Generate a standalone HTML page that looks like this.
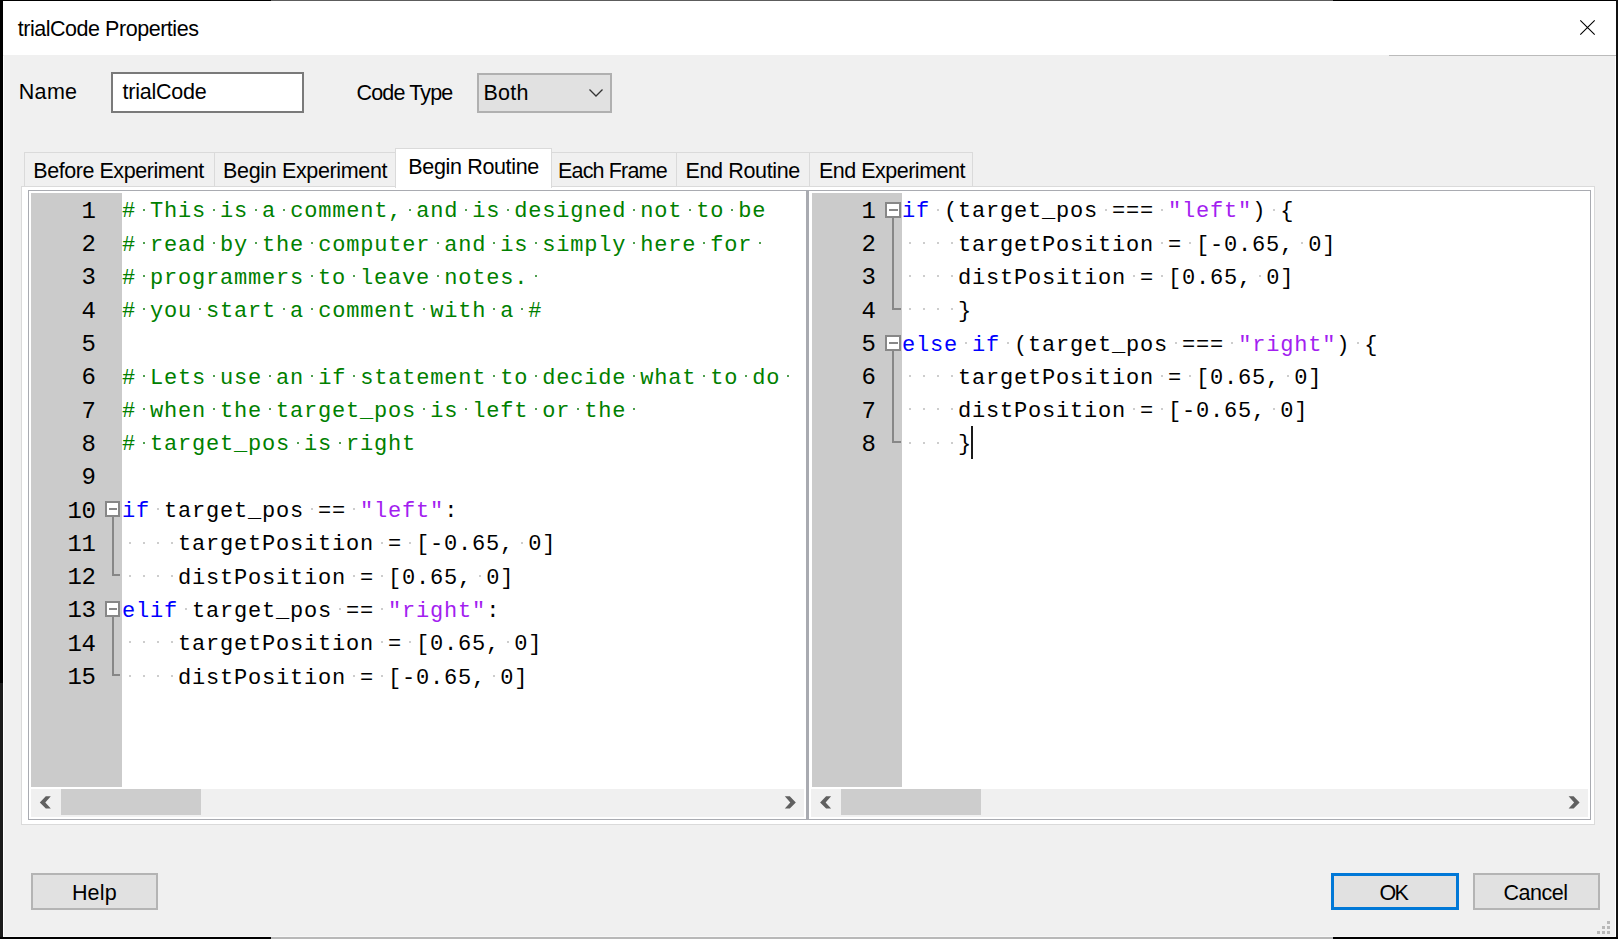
<!DOCTYPE html>
<html><head><meta charset="utf-8">
<style>
html,body{margin:0;padding:0;width:1618px;height:939px;overflow:hidden;background:#f0f0f0;}
*{box-sizing:border-box;}
.a{position:absolute;}
.ui{font-family:"Liberation Sans",sans-serif;font-size:20.5px;color:#000;white-space:pre;line-height:1;}
.mono{font-family:"Liberation Mono",monospace;white-space:pre;line-height:1;}
</style></head><body>
<div class="a" style="left:0;top:0;width:1618px;height:939px;background:#f0f0f0;overflow:hidden;">
<div class="a" style="left:3px;top:1px;width:1613px;height:54px;background:#fff;"></div>
<div class="a" style="left:1389px;top:55px;width:227px;height:1px;background:#bbbbbb;"></div>
<div class="a ui" style="left:17.7px;top:18.70px;font-size:21.5px;letter-spacing:-0.463px;color:#000;">trialCode Properties</div>
<svg class="a" style="left:1578px;top:18px;" width="20" height="20" viewBox="0 0 20 20"><path d="M2.3 2.3 L16.7 16.7 M16.7 2.3 L2.3 16.7" stroke="#000" stroke-width="1.1" fill="none"/></svg>
<div class="a ui" style="left:18.8px;top:82.00px;font-size:21.5px;letter-spacing:0.3px;color:#000;">Name</div>
<div class="a" style="left:111px;top:72px;width:193px;height:41px;background:#fff;border:2px solid #7a7a7a;"></div>
<div class="a ui" style="left:122.6px;top:81.80px;font-size:21.5px;letter-spacing:-0.238px;color:#000;">trialCode</div>
<div class="a ui" style="left:356.6px;top:82.50px;font-size:21.5px;letter-spacing:-0.863px;color:#000;">Code Type</div>
<div class="a" style="left:477px;top:73px;width:135px;height:40px;background:#e1e1e1;border:2px solid #b0b0b0;"></div>
<div class="a ui" style="left:483.5px;top:83.40px;font-size:21.5px;letter-spacing:0.267px;color:#000;">Both</div>
<svg class="a" style="left:587px;top:86px;" width="18" height="14" viewBox="0 0 18 14"><path d="M2.5 3.5 L9 10 L15.5 3.5" stroke="#333" stroke-width="1.3" fill="none"/></svg>
<div class="a" style="left:24px;top:152px;width:191px;height:36px;background:#f0f0f0;border:1px solid #dadada;"></div>
<div class="a ui" style="left:33.3px;top:160.60px;font-size:21.5px;letter-spacing:-0.45px;color:#000;">Before Experiment</div>
<div class="a" style="left:214px;top:152px;width:183px;height:36px;background:#f0f0f0;border:1px solid #dadada;"></div>
<div class="a ui" style="left:223.1px;top:160.60px;font-size:21.5px;letter-spacing:-0.353px;color:#000;">Begin Experiment</div>
<div class="a" style="left:551px;top:152px;width:126px;height:36px;background:#f0f0f0;border:1px solid #dadada;"></div>
<div class="a ui" style="left:558.0px;top:160.60px;font-size:21.5px;letter-spacing:-0.833px;color:#000;">Each Frame</div>
<div class="a" style="left:676px;top:152px;width:134px;height:36px;background:#f0f0f0;border:1px solid #dadada;"></div>
<div class="a ui" style="left:685.4px;top:160.60px;font-size:21.5px;letter-spacing:-0.34px;color:#000;">End Routine</div>
<div class="a" style="left:809px;top:152px;width:164px;height:36px;background:#f0f0f0;border:1px solid #dadada;"></div>
<div class="a ui" style="left:818.9px;top:160.60px;font-size:21.5px;letter-spacing:-0.492px;color:#000;">End Experiment</div>
<div class="a" style="left:21px;top:186px;width:1574px;height:639px;background:#fff;border:1px solid #dadada;"></div>
<div class="a" style="left:395px;top:148px;width:157px;height:40px;background:#fff;border:1px solid #dadada;border-bottom:none;"></div>
<div class="a" style="left:396px;top:186px;width:155px;height:3px;background:#fff;"></div>
<div class="a ui" style="left:408.3px;top:156.90px;font-size:21.5px;letter-spacing:-0.342px;color:#000;">Begin Routine</div>
<div class="a" style="left:28px;top:190px;width:1563px;height:630px;background:#fff;border:1px solid #a9abb1;"></div>
<div class="a" style="left:806px;top:190px;width:3px;height:630px;background:#a9abb1;"></div>
<div class="a" style="left:31px;top:193px;width:91px;height:594px;background:#cbcbcb;"></div>
<div class="a" style="left:812px;top:193px;width:90px;height:594px;background:#cbcbcb;"></div>
<div class="a" style="left:31px;top:789px;width:773px;height:28px;background:#f0f0f0;"></div>
<div class="a" style="left:811px;top:789px;width:777px;height:28px;background:#f0f0f0;"></div>
<div class="a" style="left:61px;top:789px;width:140px;height:26px;background:#cdcdcd;"></div>
<div class="a" style="left:841px;top:789px;width:140px;height:26px;background:#cdcdcd;"></div>
<svg class="a" style="left:0;top:0;" width="1618" height="939"><polygon fill="#606060" points="39.80,802.40 45.80,796.20 50.80,796.20 45.30,802.40 50.80,808.60 45.80,808.60"/></svg>
<svg class="a" style="left:0;top:0;" width="1618" height="939"><polygon fill="#606060" points="795.80,802.40 789.80,796.20 784.80,796.20 790.30,802.40 784.80,808.60 789.80,808.60"/></svg>
<svg class="a" style="left:0;top:0;" width="1618" height="939"><polygon fill="#606060" points="820.10,802.40 826.10,796.20 831.10,796.20 825.60,802.40 831.10,808.60 826.10,808.60"/></svg>
<svg class="a" style="left:0;top:0;" width="1618" height="939"><polygon fill="#606060" points="1579.60,802.40 1573.60,796.20 1568.60,796.20 1574.10,802.40 1568.60,808.60 1573.60,808.60"/></svg>
<div class="a mono" style="left:81.5px;top:199.81px;font-size:24.0px;letter-spacing:-0.400px;color:#000;">1</div>
<div class="a mono" style="left:81.5px;top:233.11px;font-size:24.0px;letter-spacing:-0.400px;color:#000;">2</div>
<div class="a mono" style="left:81.5px;top:266.41px;font-size:24.0px;letter-spacing:-0.400px;color:#000;">3</div>
<div class="a mono" style="left:81.5px;top:299.71px;font-size:24.0px;letter-spacing:-0.400px;color:#000;">4</div>
<div class="a mono" style="left:81.5px;top:333.01px;font-size:24.0px;letter-spacing:-0.400px;color:#000;">5</div>
<div class="a mono" style="left:81.5px;top:366.31px;font-size:24.0px;letter-spacing:-0.400px;color:#000;">6</div>
<div class="a mono" style="left:81.5px;top:399.61px;font-size:24.0px;letter-spacing:-0.400px;color:#000;">7</div>
<div class="a mono" style="left:81.5px;top:432.91px;font-size:24.0px;letter-spacing:-0.400px;color:#000;">8</div>
<div class="a mono" style="left:81.5px;top:466.21px;font-size:24.0px;letter-spacing:-0.400px;color:#000;">9</div>
<div class="a mono" style="left:67.5px;top:499.51px;font-size:24.0px;letter-spacing:-0.400px;color:#000;">10</div>
<div class="a mono" style="left:67.5px;top:532.81px;font-size:24.0px;letter-spacing:-0.400px;color:#000;">11</div>
<div class="a mono" style="left:67.5px;top:566.11px;font-size:24.0px;letter-spacing:-0.400px;color:#000;">12</div>
<div class="a mono" style="left:67.5px;top:599.41px;font-size:24.0px;letter-spacing:-0.400px;color:#000;">13</div>
<div class="a mono" style="left:67.5px;top:632.71px;font-size:24.0px;letter-spacing:-0.400px;color:#000;">14</div>
<div class="a mono" style="left:67.5px;top:666.01px;font-size:24.0px;letter-spacing:-0.400px;color:#000;">15</div>
<div class="a mono" style="left:861.5px;top:199.81px;font-size:24.0px;letter-spacing:-0.400px;color:#000;">1</div>
<div class="a mono" style="left:861.5px;top:233.11px;font-size:24.0px;letter-spacing:-0.400px;color:#000;">2</div>
<div class="a mono" style="left:861.5px;top:266.41px;font-size:24.0px;letter-spacing:-0.400px;color:#000;">3</div>
<div class="a mono" style="left:861.5px;top:299.71px;font-size:24.0px;letter-spacing:-0.400px;color:#000;">4</div>
<div class="a mono" style="left:861.5px;top:333.01px;font-size:24.0px;letter-spacing:-0.400px;color:#000;">5</div>
<div class="a mono" style="left:861.5px;top:366.31px;font-size:24.0px;letter-spacing:-0.400px;color:#000;">6</div>
<div class="a mono" style="left:861.5px;top:399.61px;font-size:24.0px;letter-spacing:-0.400px;color:#000;">7</div>
<div class="a mono" style="left:861.5px;top:432.91px;font-size:24.0px;letter-spacing:-0.400px;color:#000;">8</div>
<div class="a" style="left:143px;top:209px;width:2px;height:2px;background:#4f9f4f;"></div>
<div class="a" style="left:213px;top:209px;width:2px;height:2px;background:#4f9f4f;"></div>
<div class="a" style="left:255px;top:209px;width:2px;height:2px;background:#4f9f4f;"></div>
<div class="a" style="left:283px;top:209px;width:2px;height:2px;background:#4f9f4f;"></div>
<div class="a" style="left:409px;top:209px;width:2px;height:2px;background:#4f9f4f;"></div>
<div class="a" style="left:465px;top:209px;width:2px;height:2px;background:#4f9f4f;"></div>
<div class="a" style="left:507px;top:209px;width:2px;height:2px;background:#4f9f4f;"></div>
<div class="a" style="left:633px;top:209px;width:2px;height:2px;background:#4f9f4f;"></div>
<div class="a" style="left:689px;top:209px;width:2px;height:2px;background:#4f9f4f;"></div>
<div class="a" style="left:731px;top:209px;width:2px;height:2px;background:#4f9f4f;"></div>
<div class="a mono" style="left:122px;top:201.35px;font-size:22.0px;letter-spacing:0.800px;color:#000;"><span style="color:#008000">#</span> <span style="color:#008000">This</span> <span style="color:#008000">is</span> <span style="color:#008000">a</span> <span style="color:#008000">comment,</span> <span style="color:#008000">and</span> <span style="color:#008000">is</span> <span style="color:#008000">designed</span> <span style="color:#008000">not</span> <span style="color:#008000">to</span> <span style="color:#008000">be</span></div>
<div class="a" style="left:143px;top:242px;width:2px;height:2px;background:#4f9f4f;"></div>
<div class="a" style="left:213px;top:242px;width:2px;height:2px;background:#4f9f4f;"></div>
<div class="a" style="left:255px;top:242px;width:2px;height:2px;background:#4f9f4f;"></div>
<div class="a" style="left:311px;top:242px;width:2px;height:2px;background:#4f9f4f;"></div>
<div class="a" style="left:437px;top:242px;width:2px;height:2px;background:#4f9f4f;"></div>
<div class="a" style="left:493px;top:242px;width:2px;height:2px;background:#4f9f4f;"></div>
<div class="a" style="left:535px;top:242px;width:2px;height:2px;background:#4f9f4f;"></div>
<div class="a" style="left:633px;top:242px;width:2px;height:2px;background:#4f9f4f;"></div>
<div class="a" style="left:703px;top:242px;width:2px;height:2px;background:#4f9f4f;"></div>
<div class="a" style="left:759px;top:242px;width:2px;height:2px;background:#4f9f4f;"></div>
<div class="a mono" style="left:122px;top:234.65px;font-size:22.0px;letter-spacing:0.800px;color:#000;"><span style="color:#008000">#</span> <span style="color:#008000">read</span> <span style="color:#008000">by</span> <span style="color:#008000">the</span> <span style="color:#008000">computer</span> <span style="color:#008000">and</span> <span style="color:#008000">is</span> <span style="color:#008000">simply</span> <span style="color:#008000">here</span> <span style="color:#008000">for</span> </div>
<div class="a" style="left:143px;top:275px;width:2px;height:2px;background:#4f9f4f;"></div>
<div class="a" style="left:311px;top:275px;width:2px;height:2px;background:#4f9f4f;"></div>
<div class="a" style="left:353px;top:275px;width:2px;height:2px;background:#4f9f4f;"></div>
<div class="a" style="left:437px;top:275px;width:2px;height:2px;background:#4f9f4f;"></div>
<div class="a" style="left:535px;top:275px;width:2px;height:2px;background:#4f9f4f;"></div>
<div class="a mono" style="left:122px;top:267.95px;font-size:22.0px;letter-spacing:0.800px;color:#000;"><span style="color:#008000">#</span> <span style="color:#008000">programmers</span> <span style="color:#008000">to</span> <span style="color:#008000">leave</span> <span style="color:#008000">notes.</span> </div>
<div class="a" style="left:143px;top:308px;width:2px;height:2px;background:#4f9f4f;"></div>
<div class="a" style="left:199px;top:308px;width:2px;height:2px;background:#4f9f4f;"></div>
<div class="a" style="left:283px;top:308px;width:2px;height:2px;background:#4f9f4f;"></div>
<div class="a" style="left:311px;top:308px;width:2px;height:2px;background:#4f9f4f;"></div>
<div class="a" style="left:423px;top:308px;width:2px;height:2px;background:#4f9f4f;"></div>
<div class="a" style="left:493px;top:308px;width:2px;height:2px;background:#4f9f4f;"></div>
<div class="a" style="left:521px;top:308px;width:2px;height:2px;background:#4f9f4f;"></div>
<div class="a mono" style="left:122px;top:301.25px;font-size:22.0px;letter-spacing:0.800px;color:#000;"><span style="color:#008000">#</span> <span style="color:#008000">you</span> <span style="color:#008000">start</span> <span style="color:#008000">a</span> <span style="color:#008000">comment</span> <span style="color:#008000">with</span> <span style="color:#008000">a</span> <span style="color:#008000">#</span></div>
<div class="a" style="left:143px;top:375px;width:2px;height:2px;background:#4f9f4f;"></div>
<div class="a" style="left:213px;top:375px;width:2px;height:2px;background:#4f9f4f;"></div>
<div class="a" style="left:269px;top:375px;width:2px;height:2px;background:#4f9f4f;"></div>
<div class="a" style="left:311px;top:375px;width:2px;height:2px;background:#4f9f4f;"></div>
<div class="a" style="left:353px;top:375px;width:2px;height:2px;background:#4f9f4f;"></div>
<div class="a" style="left:493px;top:375px;width:2px;height:2px;background:#4f9f4f;"></div>
<div class="a" style="left:535px;top:375px;width:2px;height:2px;background:#4f9f4f;"></div>
<div class="a" style="left:633px;top:375px;width:2px;height:2px;background:#4f9f4f;"></div>
<div class="a" style="left:703px;top:375px;width:2px;height:2px;background:#4f9f4f;"></div>
<div class="a" style="left:745px;top:375px;width:2px;height:2px;background:#4f9f4f;"></div>
<div class="a" style="left:787px;top:375px;width:2px;height:2px;background:#4f9f4f;"></div>
<div class="a mono" style="left:122px;top:367.85px;font-size:22.0px;letter-spacing:0.800px;color:#000;"><span style="color:#008000">#</span> <span style="color:#008000">Lets</span> <span style="color:#008000">use</span> <span style="color:#008000">an</span> <span style="color:#008000">if</span> <span style="color:#008000">statement</span> <span style="color:#008000">to</span> <span style="color:#008000">decide</span> <span style="color:#008000">what</span> <span style="color:#008000">to</span> <span style="color:#008000">do</span> </div>
<div class="a" style="left:143px;top:408px;width:2px;height:2px;background:#4f9f4f;"></div>
<div class="a" style="left:213px;top:408px;width:2px;height:2px;background:#4f9f4f;"></div>
<div class="a" style="left:269px;top:408px;width:2px;height:2px;background:#4f9f4f;"></div>
<div class="a" style="left:423px;top:408px;width:2px;height:2px;background:#4f9f4f;"></div>
<div class="a" style="left:465px;top:408px;width:2px;height:2px;background:#4f9f4f;"></div>
<div class="a" style="left:535px;top:408px;width:2px;height:2px;background:#4f9f4f;"></div>
<div class="a" style="left:577px;top:408px;width:2px;height:2px;background:#4f9f4f;"></div>
<div class="a" style="left:633px;top:408px;width:2px;height:2px;background:#4f9f4f;"></div>
<div class="a mono" style="left:122px;top:401.15px;font-size:22.0px;letter-spacing:0.800px;color:#000;"><span style="color:#008000">#</span> <span style="color:#008000">when</span> <span style="color:#008000">the</span> <span style="color:#008000">target_pos</span> <span style="color:#008000">is</span> <span style="color:#008000">left</span> <span style="color:#008000">or</span> <span style="color:#008000">the</span> </div>
<div class="a" style="left:143px;top:442px;width:2px;height:2px;background:#4f9f4f;"></div>
<div class="a" style="left:297px;top:442px;width:2px;height:2px;background:#4f9f4f;"></div>
<div class="a" style="left:339px;top:442px;width:2px;height:2px;background:#4f9f4f;"></div>
<div class="a mono" style="left:122px;top:434.45px;font-size:22.0px;letter-spacing:0.800px;color:#000;"><span style="color:#008000">#</span> <span style="color:#008000">target_pos</span> <span style="color:#008000">is</span> <span style="color:#008000">right</span></div>
<div class="a" style="left:157px;top:508px;width:2px;height:2px;background:#cdcdcd;"></div>
<div class="a" style="left:311px;top:508px;width:2px;height:2px;background:#cdcdcd;"></div>
<div class="a" style="left:353px;top:508px;width:2px;height:2px;background:#cdcdcd;"></div>
<div class="a mono" style="left:122px;top:501.05px;font-size:22.0px;letter-spacing:0.800px;color:#000;"><span style="color:#0000ff">if</span> <span style="color:#000000">target_pos</span> <span style="color:#000000">==</span> <span style="color:#a31ff0">&quot;left&quot;</span><span style="color:#000000">:</span></div>
<div class="a" style="left:129px;top:542px;width:2px;height:2px;background:#cdcdcd;"></div>
<div class="a" style="left:143px;top:542px;width:2px;height:2px;background:#cdcdcd;"></div>
<div class="a" style="left:157px;top:542px;width:2px;height:2px;background:#cdcdcd;"></div>
<div class="a" style="left:171px;top:542px;width:2px;height:2px;background:#cdcdcd;"></div>
<div class="a" style="left:381px;top:542px;width:2px;height:2px;background:#cdcdcd;"></div>
<div class="a" style="left:409px;top:542px;width:2px;height:2px;background:#cdcdcd;"></div>
<div class="a" style="left:521px;top:542px;width:2px;height:2px;background:#cdcdcd;"></div>
<div class="a mono" style="left:122px;top:534.35px;font-size:22.0px;letter-spacing:0.800px;color:#000;">    <span style="color:#000000">targetPosition</span> <span style="color:#000000">=</span> <span style="color:#000000">[-0.65,</span> <span style="color:#000000">0]</span></div>
<div class="a" style="left:129px;top:575px;width:2px;height:2px;background:#cdcdcd;"></div>
<div class="a" style="left:143px;top:575px;width:2px;height:2px;background:#cdcdcd;"></div>
<div class="a" style="left:157px;top:575px;width:2px;height:2px;background:#cdcdcd;"></div>
<div class="a" style="left:171px;top:575px;width:2px;height:2px;background:#cdcdcd;"></div>
<div class="a" style="left:353px;top:575px;width:2px;height:2px;background:#cdcdcd;"></div>
<div class="a" style="left:381px;top:575px;width:2px;height:2px;background:#cdcdcd;"></div>
<div class="a" style="left:479px;top:575px;width:2px;height:2px;background:#cdcdcd;"></div>
<div class="a mono" style="left:122px;top:567.65px;font-size:22.0px;letter-spacing:0.800px;color:#000;">    <span style="color:#000000">distPosition</span> <span style="color:#000000">=</span> <span style="color:#000000">[0.65,</span> <span style="color:#000000">0]</span></div>
<div class="a" style="left:185px;top:608px;width:2px;height:2px;background:#cdcdcd;"></div>
<div class="a" style="left:339px;top:608px;width:2px;height:2px;background:#cdcdcd;"></div>
<div class="a" style="left:381px;top:608px;width:2px;height:2px;background:#cdcdcd;"></div>
<div class="a mono" style="left:122px;top:600.95px;font-size:22.0px;letter-spacing:0.800px;color:#000;"><span style="color:#0000ff">elif</span> <span style="color:#000000">target_pos</span> <span style="color:#000000">==</span> <span style="color:#a31ff0">&quot;right&quot;</span><span style="color:#000000">:</span></div>
<div class="a" style="left:129px;top:641px;width:2px;height:2px;background:#cdcdcd;"></div>
<div class="a" style="left:143px;top:641px;width:2px;height:2px;background:#cdcdcd;"></div>
<div class="a" style="left:157px;top:641px;width:2px;height:2px;background:#cdcdcd;"></div>
<div class="a" style="left:171px;top:641px;width:2px;height:2px;background:#cdcdcd;"></div>
<div class="a" style="left:381px;top:641px;width:2px;height:2px;background:#cdcdcd;"></div>
<div class="a" style="left:409px;top:641px;width:2px;height:2px;background:#cdcdcd;"></div>
<div class="a" style="left:507px;top:641px;width:2px;height:2px;background:#cdcdcd;"></div>
<div class="a mono" style="left:122px;top:634.25px;font-size:22.0px;letter-spacing:0.800px;color:#000;">    <span style="color:#000000">targetPosition</span> <span style="color:#000000">=</span> <span style="color:#000000">[0.65,</span> <span style="color:#000000">0]</span></div>
<div class="a" style="left:129px;top:675px;width:2px;height:2px;background:#cdcdcd;"></div>
<div class="a" style="left:143px;top:675px;width:2px;height:2px;background:#cdcdcd;"></div>
<div class="a" style="left:157px;top:675px;width:2px;height:2px;background:#cdcdcd;"></div>
<div class="a" style="left:171px;top:675px;width:2px;height:2px;background:#cdcdcd;"></div>
<div class="a" style="left:353px;top:675px;width:2px;height:2px;background:#cdcdcd;"></div>
<div class="a" style="left:381px;top:675px;width:2px;height:2px;background:#cdcdcd;"></div>
<div class="a" style="left:493px;top:675px;width:2px;height:2px;background:#cdcdcd;"></div>
<div class="a mono" style="left:122px;top:667.55px;font-size:22.0px;letter-spacing:0.800px;color:#000;">    <span style="color:#000000">distPosition</span> <span style="color:#000000">=</span> <span style="color:#000000">[-0.65,</span> <span style="color:#000000">0]</span></div>
<div class="a" style="left:937px;top:209px;width:2px;height:2px;background:#cdcdcd;"></div>
<div class="a" style="left:1105px;top:209px;width:2px;height:2px;background:#cdcdcd;"></div>
<div class="a" style="left:1161px;top:209px;width:2px;height:2px;background:#cdcdcd;"></div>
<div class="a" style="left:1273px;top:209px;width:2px;height:2px;background:#cdcdcd;"></div>
<div class="a mono" style="left:902px;top:201.35px;font-size:22.0px;letter-spacing:0.800px;color:#000;"><span style="color:#0000ff">if</span> <span style="color:#000000">(target_pos</span> <span style="color:#000000">===</span> <span style="color:#a31ff0">&quot;left&quot;</span><span style="color:#000000">)</span> <span style="color:#000000">{</span></div>
<div class="a" style="left:909px;top:242px;width:2px;height:2px;background:#cdcdcd;"></div>
<div class="a" style="left:923px;top:242px;width:2px;height:2px;background:#cdcdcd;"></div>
<div class="a" style="left:937px;top:242px;width:2px;height:2px;background:#cdcdcd;"></div>
<div class="a" style="left:951px;top:242px;width:2px;height:2px;background:#cdcdcd;"></div>
<div class="a" style="left:1161px;top:242px;width:2px;height:2px;background:#cdcdcd;"></div>
<div class="a" style="left:1189px;top:242px;width:2px;height:2px;background:#cdcdcd;"></div>
<div class="a" style="left:1301px;top:242px;width:2px;height:2px;background:#cdcdcd;"></div>
<div class="a mono" style="left:902px;top:234.65px;font-size:22.0px;letter-spacing:0.800px;color:#000;">    <span style="color:#000000">targetPosition</span> <span style="color:#000000">=</span> <span style="color:#000000">[-0.65,</span> <span style="color:#000000">0]</span></div>
<div class="a" style="left:909px;top:275px;width:2px;height:2px;background:#cdcdcd;"></div>
<div class="a" style="left:923px;top:275px;width:2px;height:2px;background:#cdcdcd;"></div>
<div class="a" style="left:937px;top:275px;width:2px;height:2px;background:#cdcdcd;"></div>
<div class="a" style="left:951px;top:275px;width:2px;height:2px;background:#cdcdcd;"></div>
<div class="a" style="left:1133px;top:275px;width:2px;height:2px;background:#cdcdcd;"></div>
<div class="a" style="left:1161px;top:275px;width:2px;height:2px;background:#cdcdcd;"></div>
<div class="a" style="left:1259px;top:275px;width:2px;height:2px;background:#cdcdcd;"></div>
<div class="a mono" style="left:902px;top:267.95px;font-size:22.0px;letter-spacing:0.800px;color:#000;">    <span style="color:#000000">distPosition</span> <span style="color:#000000">=</span> <span style="color:#000000">[0.65,</span> <span style="color:#000000">0]</span></div>
<div class="a" style="left:909px;top:308px;width:2px;height:2px;background:#cdcdcd;"></div>
<div class="a" style="left:923px;top:308px;width:2px;height:2px;background:#cdcdcd;"></div>
<div class="a" style="left:937px;top:308px;width:2px;height:2px;background:#cdcdcd;"></div>
<div class="a" style="left:951px;top:308px;width:2px;height:2px;background:#cdcdcd;"></div>
<div class="a mono" style="left:902px;top:301.25px;font-size:22.0px;letter-spacing:0.800px;color:#000;">    <span style="color:#000000">}</span></div>
<div class="a" style="left:965px;top:342px;width:2px;height:2px;background:#cdcdcd;"></div>
<div class="a" style="left:1007px;top:342px;width:2px;height:2px;background:#cdcdcd;"></div>
<div class="a" style="left:1175px;top:342px;width:2px;height:2px;background:#cdcdcd;"></div>
<div class="a" style="left:1231px;top:342px;width:2px;height:2px;background:#cdcdcd;"></div>
<div class="a" style="left:1357px;top:342px;width:2px;height:2px;background:#cdcdcd;"></div>
<div class="a mono" style="left:902px;top:334.55px;font-size:22.0px;letter-spacing:0.800px;color:#000;"><span style="color:#0000ff">else</span> <span style="color:#0000ff">if</span> <span style="color:#000000">(target_pos</span> <span style="color:#000000">===</span> <span style="color:#a31ff0">&quot;right&quot;</span><span style="color:#000000">)</span> <span style="color:#000000">{</span></div>
<div class="a" style="left:909px;top:375px;width:2px;height:2px;background:#cdcdcd;"></div>
<div class="a" style="left:923px;top:375px;width:2px;height:2px;background:#cdcdcd;"></div>
<div class="a" style="left:937px;top:375px;width:2px;height:2px;background:#cdcdcd;"></div>
<div class="a" style="left:951px;top:375px;width:2px;height:2px;background:#cdcdcd;"></div>
<div class="a" style="left:1161px;top:375px;width:2px;height:2px;background:#cdcdcd;"></div>
<div class="a" style="left:1189px;top:375px;width:2px;height:2px;background:#cdcdcd;"></div>
<div class="a" style="left:1287px;top:375px;width:2px;height:2px;background:#cdcdcd;"></div>
<div class="a mono" style="left:902px;top:367.85px;font-size:22.0px;letter-spacing:0.800px;color:#000;">    <span style="color:#000000">targetPosition</span> <span style="color:#000000">=</span> <span style="color:#000000">[0.65,</span> <span style="color:#000000">0]</span></div>
<div class="a" style="left:909px;top:408px;width:2px;height:2px;background:#cdcdcd;"></div>
<div class="a" style="left:923px;top:408px;width:2px;height:2px;background:#cdcdcd;"></div>
<div class="a" style="left:937px;top:408px;width:2px;height:2px;background:#cdcdcd;"></div>
<div class="a" style="left:951px;top:408px;width:2px;height:2px;background:#cdcdcd;"></div>
<div class="a" style="left:1133px;top:408px;width:2px;height:2px;background:#cdcdcd;"></div>
<div class="a" style="left:1161px;top:408px;width:2px;height:2px;background:#cdcdcd;"></div>
<div class="a" style="left:1273px;top:408px;width:2px;height:2px;background:#cdcdcd;"></div>
<div class="a mono" style="left:902px;top:401.15px;font-size:22.0px;letter-spacing:0.800px;color:#000;">    <span style="color:#000000">distPosition</span> <span style="color:#000000">=</span> <span style="color:#000000">[-0.65,</span> <span style="color:#000000">0]</span></div>
<div class="a" style="left:909px;top:442px;width:2px;height:2px;background:#cdcdcd;"></div>
<div class="a" style="left:923px;top:442px;width:2px;height:2px;background:#cdcdcd;"></div>
<div class="a" style="left:937px;top:442px;width:2px;height:2px;background:#cdcdcd;"></div>
<div class="a" style="left:951px;top:442px;width:2px;height:2px;background:#cdcdcd;"></div>
<div class="a mono" style="left:902px;top:434.45px;font-size:22.0px;letter-spacing:0.800px;color:#000;">    <span style="color:#000000">}</span></div>
<div class="a" style="left:105px;top:501px;width:15px;height:16px;background:#fff;border:2px solid #878787;"></div>
<div class="a" style="left:109px;top:508px;width:8px;height:2px;background:#878787;"></div>
<div class="a" style="left:112px;top:517px;width:2px;height:59px;background:#878787;"></div>
<div class="a" style="left:112px;top:574px;width:8px;height:2px;background:#878787;"></div>
<div class="a" style="left:105px;top:601px;width:15px;height:16px;background:#fff;border:2px solid #878787;"></div>
<div class="a" style="left:109px;top:608px;width:8px;height:2px;background:#878787;"></div>
<div class="a" style="left:112px;top:617px;width:2px;height:59px;background:#878787;"></div>
<div class="a" style="left:112px;top:674px;width:8px;height:2px;background:#878787;"></div>
<div class="a" style="left:885px;top:202px;width:16px;height:16px;background:#fff;border:2px solid #878787;"></div>
<div class="a" style="left:889px;top:209px;width:9px;height:2px;background:#878787;"></div>
<div class="a" style="left:892px;top:218px;width:2px;height:92px;background:#878787;"></div>
<div class="a" style="left:892px;top:308px;width:9px;height:2px;background:#878787;"></div>
<div class="a" style="left:885px;top:335px;width:16px;height:16px;background:#fff;border:2px solid #878787;"></div>
<div class="a" style="left:889px;top:342px;width:9px;height:2px;background:#878787;"></div>
<div class="a" style="left:892px;top:351px;width:2px;height:92px;background:#878787;"></div>
<div class="a" style="left:892px;top:441px;width:9px;height:2px;background:#878787;"></div>
<div class="a" style="left:971px;top:426px;width:2px;height:33px;background:#1a1a1a;"></div>
<div class="a" style="left:31px;top:873px;width:127px;height:37px;background:#e1e1e1;border:2px solid #b4b4b4;"></div>
<div class="a ui" style="left:71.9px;top:883.10px;font-size:21.5px;letter-spacing:0.167px;color:#000;">Help</div>
<div class="a" style="left:1331px;top:873px;width:128px;height:37px;background:#e1e1e1;border:3px solid #0078d7;"></div>
<div class="a ui" style="left:1379.6px;top:882.50px;font-size:21.5px;letter-spacing:-1.8px;color:#000;">OK</div>
<div class="a" style="left:1473px;top:873px;width:127px;height:37px;background:#e1e1e1;border:2px solid #b4b4b4;"></div>
<div class="a ui" style="left:1503.6px;top:882.50px;font-size:21.5px;letter-spacing:-0.52px;color:#000;">Cancel</div>
<div class="a" style="left:1607px;top:921px;width:3px;height:3px;background:#b9b9b9;"></div>
<div class="a" style="left:1602px;top:926px;width:3px;height:3px;background:#b9b9b9;"></div>
<div class="a" style="left:1607px;top:926px;width:3px;height:3px;background:#b9b9b9;"></div>
<div class="a" style="left:1597px;top:931px;width:3px;height:3px;background:#b9b9b9;"></div>
<div class="a" style="left:1602px;top:931px;width:3px;height:3px;background:#b9b9b9;"></div>
<div class="a" style="left:1607px;top:931px;width:3px;height:3px;background:#b9b9b9;"></div>
<div class="a" style="left:0px;top:0px;width:271px;height:1px;background:#000;"></div>
<div class="a" style="left:271px;top:0px;width:1062px;height:1px;background:#5c5c5c;"></div>
<div class="a" style="left:1333px;top:0px;width:285px;height:1px;background:#000;"></div>
<div class="a" style="left:0px;top:0px;width:3px;height:683px;background:#000;"></div>
<div class="a" style="left:0px;top:683px;width:3px;height:256px;background:#1c1c1c;"></div>
<div class="a" style="left:1616px;top:0px;width:2px;height:939px;background:#111;"></div>
<div class="a" style="left:0px;top:937px;width:271px;height:2px;background:#000;"></div>
<div class="a" style="left:271px;top:937px;width:1062px;height:2px;background:#b8b8b8;"></div>
<div class="a" style="left:1333px;top:937px;width:285px;height:2px;background:#000;"></div>
<div class="a" style="left:3px;top:56px;width:1px;height:881px;background:#fff;"></div>
<div class="a" style="left:1615px;top:56px;width:1px;height:881px;background:#fff;"></div>
<div class="a" style="left:3px;top:936px;width:1613px;height:1px;background:#f6f6f6;"></div>
</div>
</body></html>
